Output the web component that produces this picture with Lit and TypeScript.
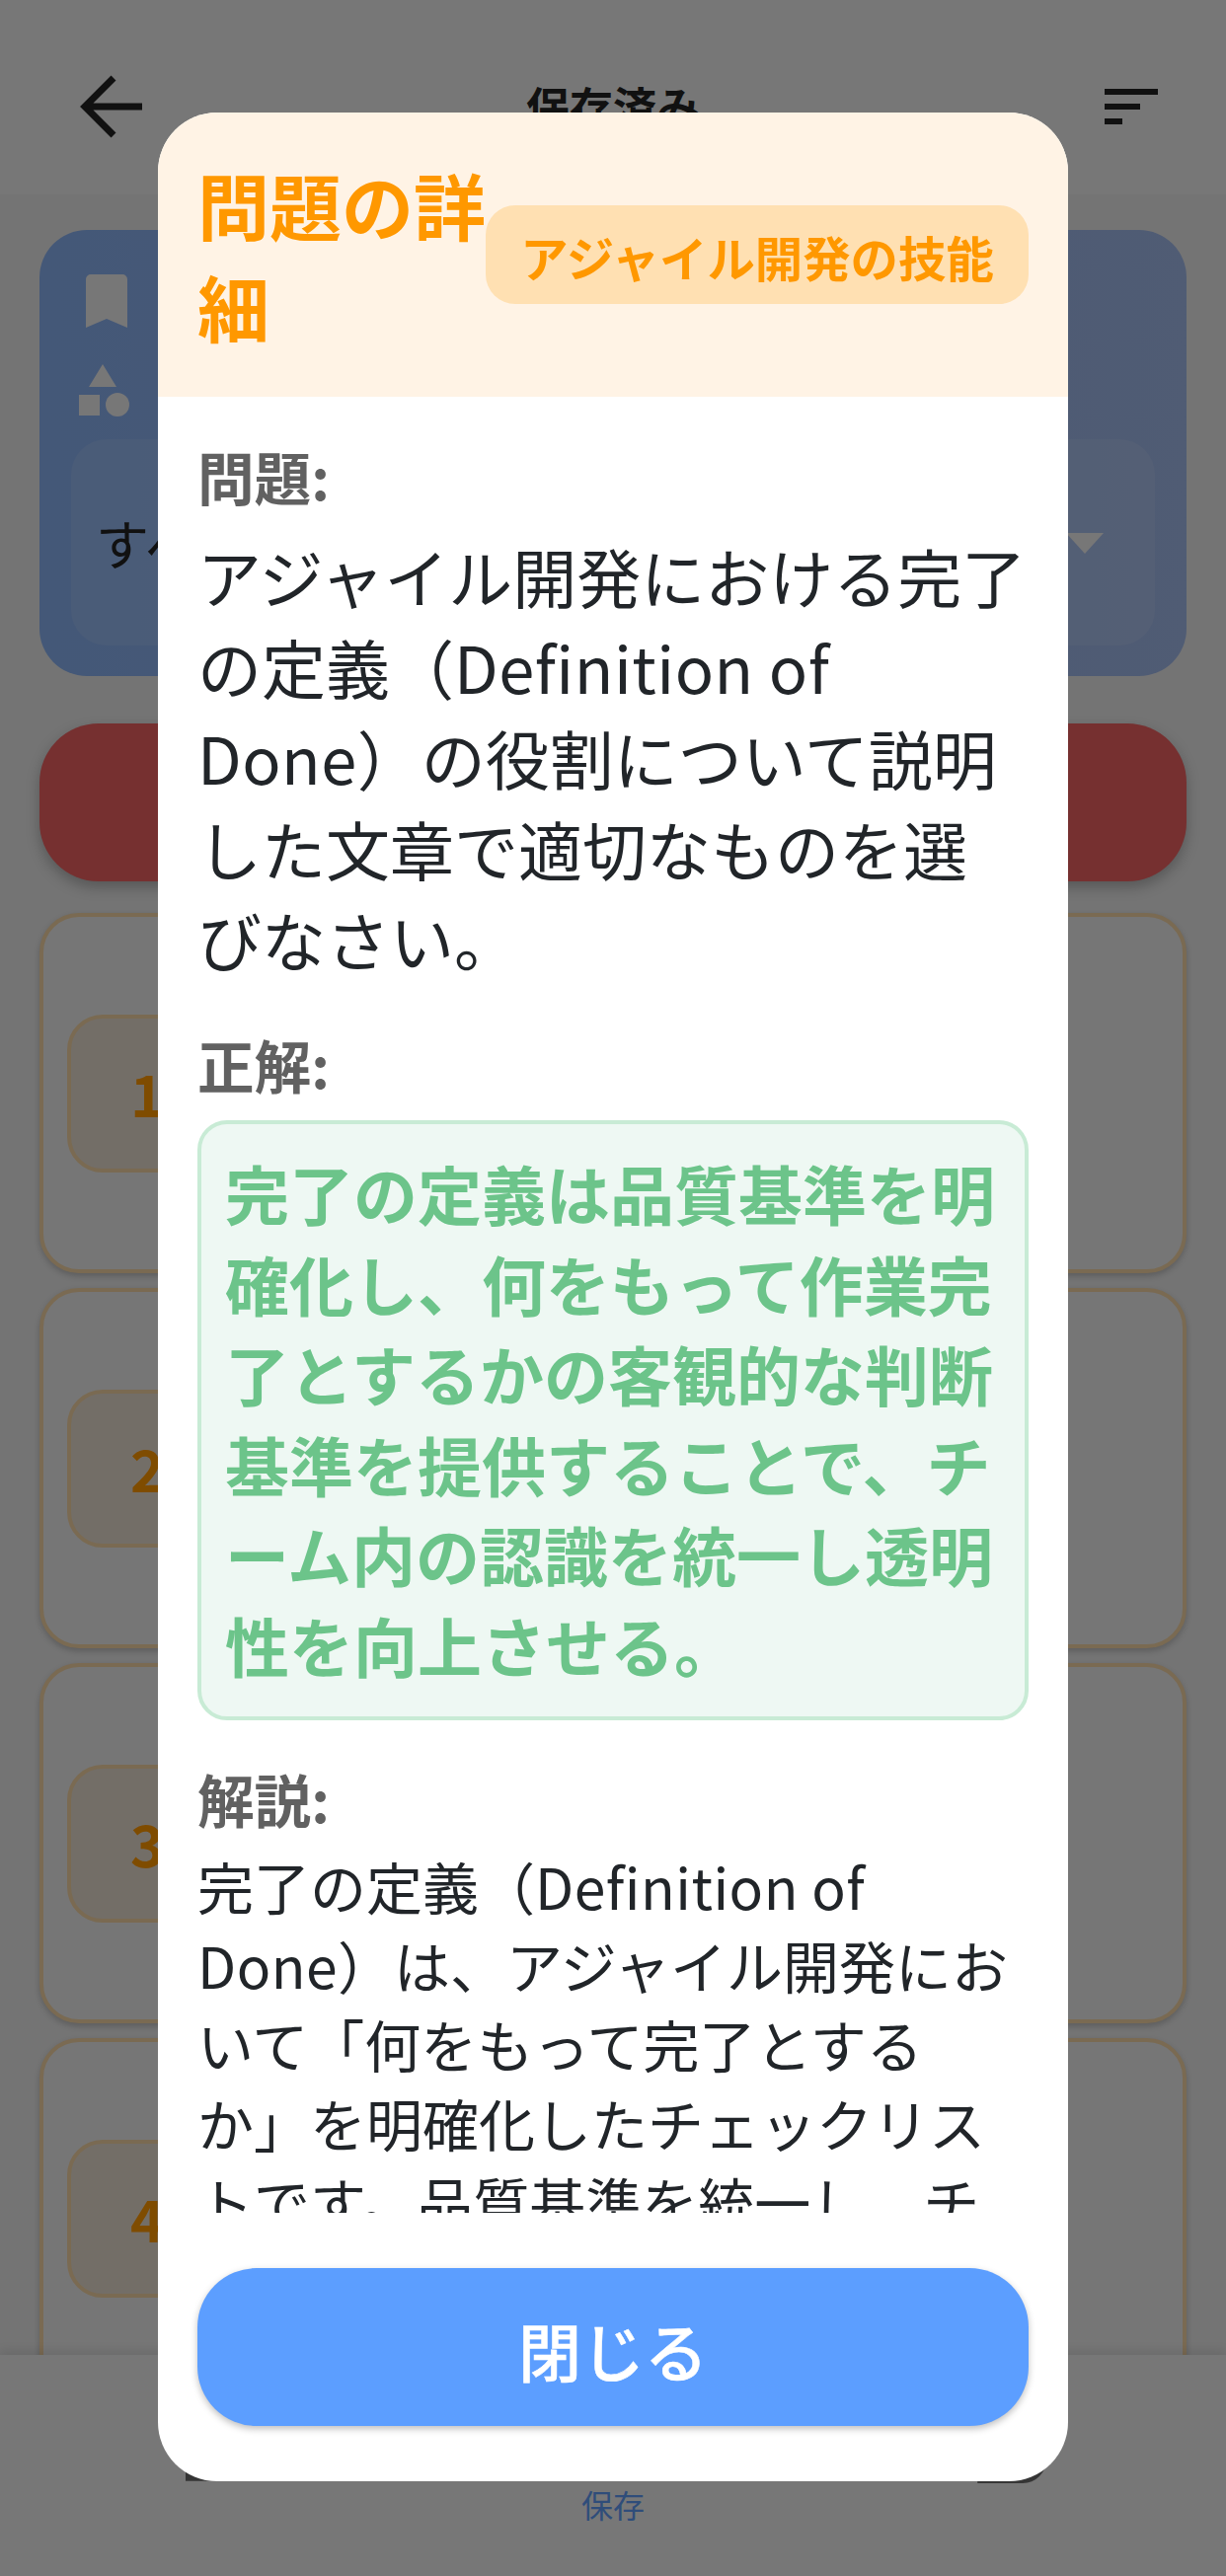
import { LitElement, html, css, svg } from "lit";
import { customElement } from "lit/decorators.js";

const L = (s: string) => html`<span class="lat">${s}</span>`;
const Q = [html`アジャイル開発における完了`, html`の定義（${L("Definition of")}`, html`${L("Done")}）の役割について説明`, html`した文章で適切なものを選`, html`びなさい。`];
const A = ["完了の定義は品質基準を明", "確化し、何をもって作業完", "了とするかの客観的な判断", "基準を提供することで、チ", "ーム内の認識を統一し透明", "性を向上させる。"];
const E = [html`完了の定義（${L("Definition of")}`, html`${L("Done")}）は、アジャイル開発にお`, html`いて「何をもって完了とする`, html`か」を明確化したチェックリス`, html`トです。品質基準を統一し、チ`, html`ーム内の認識を揃えます。`];

const trash = svg`<path d="M6 19c0 1.1.9 2 2 2h8c1.1 0 2-.9 2-2V7H6v12zM19 4h-3.5l-1-1h-5l-1 1H5v2h14V4z"/>`;

@customElement("app-root")
export class AppRoot extends LitElement {
  static styles = css`
    :host { display: block; width: 1242px; height: 2610px; overflow: hidden; position: relative;
      font-family: "Noto Sans CJK JP", "Noto Sans", sans-serif; }
    .page { height: 2610px; display: flex; flex-direction: column; background: #e8e8e8; }
    .topbar { height: 197px; flex: none; background: #eeeeee; position: relative; display: flex;
      align-items: flex-start; justify-content: space-between; box-sizing: border-box; padding: 76px 69px 0 80px; }
    .back { width: 64px; height: 64px; display: block; }
    .top-title { position: absolute; left: 0; right: 0; top: 74px; text-align: center; font-size: 44px; font-weight: 700; color: #222; line-height: 66px; }
    .sort { width: 54px; display: flex; flex-direction: column; gap: 9px; margin-top: 14px; }
    .sort i { display: block; height: 6px; background: #222; }
    .sort i:nth-child(1) { width: 54px; } .sort i:nth-child(2) { width: 36px; } .sort i:nth-child(3) { width: 18px; }
    .content { flex: 1; min-height: 0; overflow: hidden; padding: 36px 40px 0; display: flex; flex-direction: column; }
    .filter { flex: none; height: 452px; box-sizing: border-box; border-radius: 48px; padding: 45px 32px 32px;
      background: linear-gradient(90deg, #88b0f0, #a0b8e8); display: flex; flex-direction: column; }
    .f-row { display: flex; align-items: center; gap: 27px; padding-left: 15px; height: 54px; }
    .f-row svg { display: block; flex: none; }
    .f-row.shapes { margin-top: 37px; height: 54px; padding-left: 8px; color: #eee; font-size: 48px; white-space: nowrap; }
    .select { margin-top: 22px; height: 209px; flex: none; border-radius: 36px; background: rgba(255,255,255,.1);
      display: flex; align-items: center; justify-content: space-between; padding: 0 52px 0 25px; font-size: 54px; color: #222; box-sizing: border-box; }
    .select svg { margin-top: 1px; }
    .red { flex: none; height: 160px; margin-top: 48px; border-radius: 60px; background: #ec6060; box-shadow: 0 6px 14px rgba(0,0,0,.25); }
    .cards { display: flex; flex-direction: column; gap: 15px; margin-top: 32px; }
    .card { flex: none; height: 365px; box-sizing: border-box; border: 4px solid #f4d4a4; border-radius: 40px; background: #ececec;
      box-shadow: 0 3px 6px rgba(0,0,0,.2); display: flex; align-items: center; justify-content: space-between; padding: 0 96px 0 24px; }
    .num { width: 200px; height: 160px; box-sizing: border-box; border: 4px solid #f4d4a4; border-radius: 36px; background: #e6dccf;
      color: #ff9800; font-weight: 700; font-size: 58px; line-height: 1; display: flex; align-items: center; padding: 0 0 2px 60px; }
    .card svg { width: 96px; height: 96px; fill: #ea3e2e; display: block; }
    .nav { flex: none; height: 224px; background: #eeeeee; box-shadow: 0 -4px 10px rgba(0,0,0,.1); position: relative;
      display: flex; flex-direction: column; align-items: center; }
    .pill { width: 872px; height: 116px; margin: 14px 0 -2px 6px; background: #6a6a6a; border-radius: 0 0 24px 0; flex: none;
      clip-path: polygon(0 0, 100% 0, 100% 100%, 92% 100%, 92% 98%, 0 98%); }
    .nav-label { font-size: 32px; line-height: 46px; color: #5f9bf5; }

    .overlay { position: absolute; inset: 0; background: rgba(0,0,0,.5); }
    .modal { position: absolute; left: 160px; top: 114px; width: 922px; height: 2400px; border-radius: 60px; background: #fff;
      overflow: hidden; display: flex; flex-direction: column; }
    .head { flex: none; height: 288px; box-sizing: border-box; background: #fff3e5; padding: 0 40px; display: flex; align-items: center; }
    .title { flex: 1; min-width: 0; font-size: 73px; line-height: 103px; font-weight: 700; color: #ff9800; }
    .badge { flex: none; white-space: nowrap; width: 550px; text-align: center; height: 100px; box-sizing: border-box; border-radius: 30px; background: #ffe0b2;
      color: #ff9800; font-size: 48.4px; font-weight: 700; line-height: 104px; }
    .body { flex: 1; min-height: 0; overflow: hidden; padding: 41px 40px 0; }
    .label { font-size: 57.6px; line-height: 78px; font-weight: 700; color: #616161; }
    .q { margin-top: 16px; font-size: 65px; line-height: 92.1px; color: #212529; white-space: nowrap; }
    .lat { letter-spacing: .5px; }
    .label.l2 { margin-top: 41.5px; }
    .answer { margin-top: 18px; box-sizing: border-box; height: 608px; border: 4px solid #c8ebd5; border-radius: 30px; background: #eef8f3;
      padding: 24px 24px; font-size: 65px; line-height: 91.6px; font-weight: 700; color: #6cc48a; white-space: nowrap; }
    .label.l3 { margin-top: 40px; }
    .e { margin-top: 9px; font-size: 57px; line-height: 80px; color: #212529; white-space: nowrap; }
    .foot { flex: none; height: 272px; box-sizing: border-box; padding: 56px 40px; }
    .close { height: 160px; box-sizing: border-box; padding-top: 4px; border-radius: 60px; background: #5c9eff; color: #fff; display: flex; align-items: center; justify-content: center;
      font-size: 64px; font-weight: 500; -webkit-text-stroke: .5px #fff; box-shadow: 0 3px 7px rgba(0,0,0,.25); }
  `;

  render() {
    return html`
      <div class="page">
        <div class="topbar">
          <svg class="back" viewBox="0 0 64 64" fill="none" stroke="#222" stroke-width="7"><path d="M64 32H6M35 3 6 32l29 29"/></svg>
          <div class="top-title">保存済み</div>
          <div class="sort"><i></i><i></i><i></i></div>
        </div>
        <div class="content">
          <div class="filter">
            <div class="f-row">
              <svg width="42" height="54" viewBox="0 0 42 54"><path fill="#eee" d="M5 0h32a5 5 0 0 1 5 5v49L21 45 0 54V5a5 5 0 0 1 5-5z"/></svg>
            </div>
            <div class="f-row shapes">
              <svg width="51" height="54" viewBox="0 0 51 54"><path fill="#eee" d="M24 0l14 23H10zM0 31h21v21H0z"/><circle cx="39" cy="41" r="12" fill="#eee"/></svg>
              <span>カテゴリー</span>
            </div>
            <div class="select"><span>すべて</span>
              <svg width="38" height="21" viewBox="0 0 38 21"><path fill="#eee" d="M0 0h38L19 21z"/></svg>
            </div>
          </div>
          <div class="red"></div>
          <div class="cards">
            ${[1, 2, 3, 4].map(n => html`<div class="card"><div class="num">${n}</div><svg viewBox="0 0 24 24">${trash}</svg></div>`)}
          </div>
        </div>
        <div class="nav"><div class="pill"></div><div class="nav-label">保存</div></div>
      </div>
      <div class="overlay"></div>
      <div class="modal">
        <div class="head"><div class="title">問題の詳細</div><div class="badge">アジャイル開発の技能</div></div>
        <div class="body">
          <div class="label">問題:</div>
          <div class="q">${Q.map(l => html`<div>${l}</div>`)}</div>
          <div class="label l2">正解:</div>
          <div class="answer">${A.map(l => html`<div>${l}</div>`)}</div>
          <div class="label l3">解説:</div>
          <div class="e">${E.map(l => html`<div>${l}</div>`)}</div>
        </div>
        <div class="foot"><div class="close">閉じる</div></div>
      </div>
    `;
  }
}
